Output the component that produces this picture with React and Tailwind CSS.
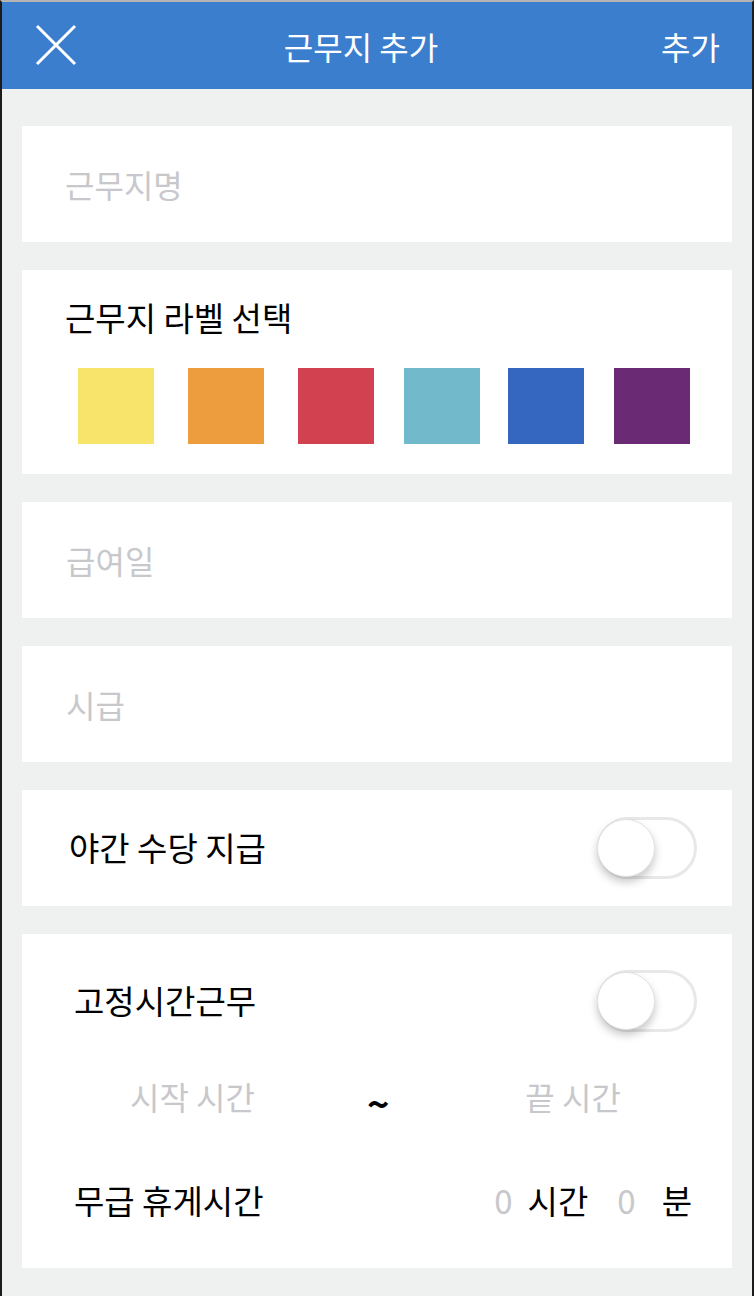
import React, { useState } from "react";

const FONT = { fontFamily: '"Noto Sans CJK KR", "Noto Sans", sans-serif' };

// ── Label colours (with the gap that sits before each) ─────────
const LABEL_COLORS = [
  { cls: "bg-[#f8e46b]", gap: "ml-0" },
  { cls: "bg-[#ed9c3e]", gap: "ml-[34px]" },
  { cls: "bg-[#d24150]", gap: "ml-[34px]" },
  { cls: "bg-[#72bacb]", gap: "ml-[30px]" },
  { cls: "bg-[#3566c0]", gap: "ml-[28px]" },
  { cls: "bg-[#6a2b74]", gap: "ml-[30px]" },
];

// ── iOS style switch ───────────────────────────────────────────
const Toggle = ({ on, onChange }) => (
  <button
    type="button"
    onClick={() => onChange(!on)}
    className={`relative w-[100px] h-[62px] rounded-full border-[3px] ${
      on ? "bg-[#4cd964] border-[#4cd964]" : "bg-white border-[#e8e8e8]"
    }`}
  >
    <span
      className={`absolute top-[-1px] w-[58px] h-[58px] rounded-full bg-white border border-[#e2e2e2] shadow-[0_5px_8px_rgba(0,0,0,0.22)] ${
        on ? "left-[37px]" : "left-[-3px]"
      }`}
    />
  </button>
);

const Card = ({ className = "", children }) => (
  <div className={`bg-white ${className}`}>{children}</div>
);

export default function App() {
  const [color, setColor] = useState(null);
  const [night, setNight] = useState(false);
  const [fixed, setFixed] = useState(false);

  return (
    <div
      style={FONT}
      className="w-[754px] h-[1296px] bg-[#eff1f0] border-x-2 border-[#1c1c1c] border-t-2 border-t-[#b4b4b4] overflow-hidden"
    >
      {/* ── Header ── */}
      <header className="h-[87px] bg-[#3b7ecd] flex items-center justify-between pl-[33px] pr-[32px] text-white">
        <svg width="42" height="42" viewBox="0 0 42 42" className="mt-[-1px]">
          <path d="M2 2 L40 40 M40 2 L2 40" stroke="white" strokeWidth="3" fill="none" />
        </svg>
        <h1 className="text-[32px] leading-none font-normal ml-[-16px]">근무지 추가</h1>
        <button type="button" className="text-[32px] leading-none">추가</button>
      </header>

      {/* ── Form ── */}
      <main className="px-[20px] pt-[37px] flex flex-col gap-[28px]">
        <Card className="h-[116px] flex items-center pl-[43px]">
          <input
            placeholder="근무지명"
            className="w-full text-[32px] outline-none placeholder:text-[#c8c8cc] bg-transparent"
          />
        </Card>

        <Card className="h-[204px] pt-[28px] pl-[43px]">
          <p className="text-[33px] leading-[38px] text-black">근무지 라벨 선택</p>
          <div className="flex pl-[13px] mt-[32px]">
            {LABEL_COLORS.map((c, i) => (
              <button
                key={c.cls}
                type="button"
                onClick={() => setColor(i)}
                className={`w-[76px] h-[76px] ${c.cls} ${c.gap} ${color === i ? "ring-4 ring-black/20" : ""}`}
              />
            ))}
          </div>
        </Card>

        <Card className="h-[116px] flex items-center pl-[44px]">
          <input
            placeholder="급여일"
            className="w-full text-[32px] outline-none placeholder:text-[#c8c8cc] bg-transparent"
          />
        </Card>

        <Card className="h-[116px] flex items-center pl-[44px]">
          <input
            placeholder="시급"
            className="w-full text-[32px] outline-none placeholder:text-[#c8c8cc] bg-transparent"
          />
        </Card>

        <Card className="h-[116px] flex items-center justify-between pl-[47px] pr-[35px]">
          <span className="text-[33px] text-black">야간 수당 지급</span>
          <Toggle on={night} onChange={setNight} />
        </Card>

        <Card className="h-[334px] pt-[36px] pl-[52px] pr-[35px]">
          <div className="h-[62px] flex items-center justify-between">
            <span className="text-[33px] text-black">고정시간근무</span>
            <Toggle on={fixed} onChange={setFixed} />
          </div>

          <div className="h-[62px] mt-[33px] flex items-center text-[32px] text-[#c8c8cc]">
            <span className="ml-[56px]">시작 시간</span>
            <span className="ml-[112px] text-[38px] leading-none text-black font-bold mt-[14px]">~</span>
            <span className="ml-[136px]">끝 시간</span>
          </div>

          <div className="h-[62px] mt-[43px] flex items-center text-[33px] pr-[5px]">
            <span className="text-black">무급 휴게시간</span>
            <div className="ml-auto flex items-center">
              <span className="text-[#c8c8cc]">0</span>
              <span className="ml-[15px] text-black">시간</span>
              <span className="ml-[29px] text-[#c8c8cc]">0</span>
              <span className="ml-[26px] text-black">분</span>
            </div>
          </div>
        </Card>
      </main>
    </div>
  );
}
